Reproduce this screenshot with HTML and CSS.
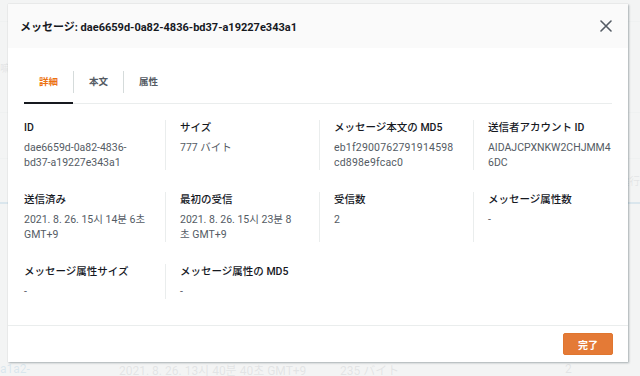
FILE: index.html
```html
<!DOCTYPE html>
<html lang="ja">
<head>
<meta charset="utf-8">
<title>メッセージ詳細</title>
<link rel="stylesheet" href="styles.css">
</head>
<body>
<div class="page">
  <div class="bg-row bg-row-top"></div>
  <div class="bg-row bg-row-mid"><span class="bg-left">嘛</span></div>
  <div class="bg-row bg-row-a"></div>
  <div class="bg-row bg-row-b"><span class="bg-right">進行</span></div>
  <div class="bg-row bg-row-c"></div>
  <div class="bg-row bg-row-last">
    <span class="bg-link">a1a2-</span>
    <span class="bg-date">2021. 8. 26. 13시 40분 40초 GMT+9</span>
    <span class="bg-size">235 バイト</span>
    <span class="bg-count">2</span>
  </div>
</div>
<div class="overlay"></div>

<div class="modal" role="dialog" aria-labelledby="modal-title">
  <header class="modal-header">
    <h2 id="modal-title" class="modal-title">メッセージ: dae6659d-0a82-4836-bd37-a19227e343a1</h2>
    <button class="close-btn" aria-label="閉じる">
      <svg width="12" height="12" viewBox="0 0 12 12" aria-hidden="true"><path d="M1 1 L11 11 M11 1 L1 11" stroke="#545b64" stroke-width="1.6" fill="none" stroke-linecap="round"/></svg>
    </button>
  </header>

  <div class="modal-body">
    <ul class="tabs">
      <li class="tab tab-active"><span class="tab-label">詳細</span></li>
      <li class="tab"><span class="tab-label">本文</span></li>
      <li class="tab"><span class="tab-label">属性</span></li>
    </ul>

    <div class="details">
      <div class="cell"><div class="key">ID</div><div class="val">dae6659d-0a82-4836-bd37-a19227e343a1</div></div>
      <div class="cell"><div class="key">サイズ</div><div class="val">777 バイト</div></div>
      <div class="cell"><div class="key">メッセージ本文の MD5</div><div class="val val-break val-hash">eb1f2900762791914598cd898e9fcac0</div></div>
      <div class="cell"><div class="key">送信者アカウント ID</div><div class="val val-break">AIDAJCPXNKW2CHJMM46DC</div></div>

      <div class="cell"><div class="key">送信済み</div><div class="val">2021. 8. 26. 15시 14분 6초 GMT+9</div></div>
      <div class="cell"><div class="key">最初の受信</div><div class="val">2021. 8. 26. 15시 23분 8초 GMT+9</div></div>
      <div class="cell"><div class="key">受信数</div><div class="val">2</div></div>
      <div class="cell"><div class="key">メッセージ属性数</div><div class="val">-</div></div>

      <div class="cell"><div class="key">メッセージ属性サイズ</div><div class="val">-</div></div>
      <div class="cell"><div class="key">メッセージ属性の MD5</div><div class="val">-</div></div>
    </div>
  </div>

  <footer class="modal-footer">
    <button class="primary-btn">完了</button>
  </footer>
</div>
</body>
</html>
```

FILE: styles.css
```css
* { box-sizing: border-box; }

html, body {
  margin: 0;
  padding: 0;
}

body {
  width: 640px;
  height: 376px;
  overflow: hidden;
  position: relative;
  font-family: Roboto, "Noto Sans CJK JP", "Noto Sans CJK KR", sans-serif;
  color: #16191f;
  background: #f2f3f3;
}

/* ---------- background page ---------- */
.page {
  height: 376px;
  display: flex;
  flex-direction: column;
  background: #ffffff;
}

.bg-row {
  border-bottom: 1px solid #d5dbdb;
  font-size: 10.5px;
  color: #545b64;
  display: flex;
  align-items: center;
}

.bg-row-top { height: 22px; }
.bg-row-mid { height: 91px; }
.bg-row-a { height: 46px; }
.bg-row-b { height: 45px; border-bottom: 2px solid #0073bb; justify-content: flex-end; }
.bg-row-c { flex: 1; border-bottom: none; }
.bg-row-last { height: 14px; border-bottom: none; font-size: 12px; }

.bg-right { color: #545b64; }
.bg-link { width: 119px; color: #0073bb; }
.bg-date { width: 221px; }
.bg-size { width: 225px; }

.overlay {
  position: absolute;
  inset: 0;
  background: rgba(242, 243, 243, 0.9);
}

/* ---------- modal ---------- */
.modal {
  position: absolute;
  left: 8px;
  top: 4px;
  width: 620px;
  height: 358px;
  background: #ffffff;
  display: flex;
  flex-direction: column;
  box-shadow: 1px 1px 2px rgba(0, 28, 36, 0.3), 0 0 1px rgba(0, 28, 36, 0.15);
}

.modal-header {
  height: 44px;
  flex: none;
  background: #fafafa;
  display: flex;
  align-items: center;
  justify-content: space-between;
  padding: 0 16px 0 12px;
}

.modal-title {
  margin: 0;
  font-size: 11px;
  font-weight: 700;
  color: #16191f;
}

.close-btn {
  border: none;
  background: transparent;
  padding: 0;
  width: 12px;
  height: 12px;
  display: flex;
}

.modal-body {
  flex: 1;
  padding: 0 16px;
}

/* ---------- tabs ---------- */
.tabs {
  list-style: none;
  margin: 18px 0 0;
  padding: 0;
  display: flex;
  border-bottom: 1px solid #eaeded;
}

.tab {
  position: relative;
  padding: 5px 0 10px;
  font-size: 9.5px;
  font-weight: 700;
  color: #545b64;
}

.tab-label {
  display: block;
  line-height: 14px;
  padding: 4px 15px;
}

.tab + .tab .tab-label {
  border-left: 1px solid #d5dbdb;
}

.tab-active { color: #ec7211; }

.tab-active::after {
  content: "";
  position: absolute;
  left: 0;
  right: 0;
  bottom: -1px;
  height: 2px;
  background: #16191f;
}

/* ---------- key/value grid ---------- */
.details {
  display: grid;
  grid-template-columns: 141px 154px 154px 154px;
  row-gap: 22px;
  margin-top: 16px;
}

.cell {
  padding: 0 16px 0 14px;
  border-left: 1px solid #eaeded;
  font-size: 10.5px;
  line-height: 15px;
}

.cell:nth-child(4n+1) {
  border-left: none;
  padding: 0 18px 0 0;
}

.cell:nth-child(4n+2) {
  padding-right: 18px;
}

.key {
  font-weight: 500;
  color: #16191f;
  margin-bottom: 5px;
}

.val {
  color: #545b64;
}

.val-break {
  overflow-wrap: anywhere;
}

.val-hash {
  letter-spacing: 0.2px;
}

/* ---------- footer ---------- */
.modal-footer {
  flex: none;
  border-top: 1px solid #eaeded;
  padding: 7px 15px 7px 0;
  display: flex;
  justify-content: flex-end;
}

.primary-btn {
  width: 50px;
  height: 22px;
  border: 1px solid #e0762f;
  border-radius: 2px;
  background: #e47a36;
  color: #ffffff;
  font-family: Roboto, "Noto Sans CJK JP", sans-serif;
  font-size: 10px;
  font-weight: 700;
  padding: 0;
}
```
